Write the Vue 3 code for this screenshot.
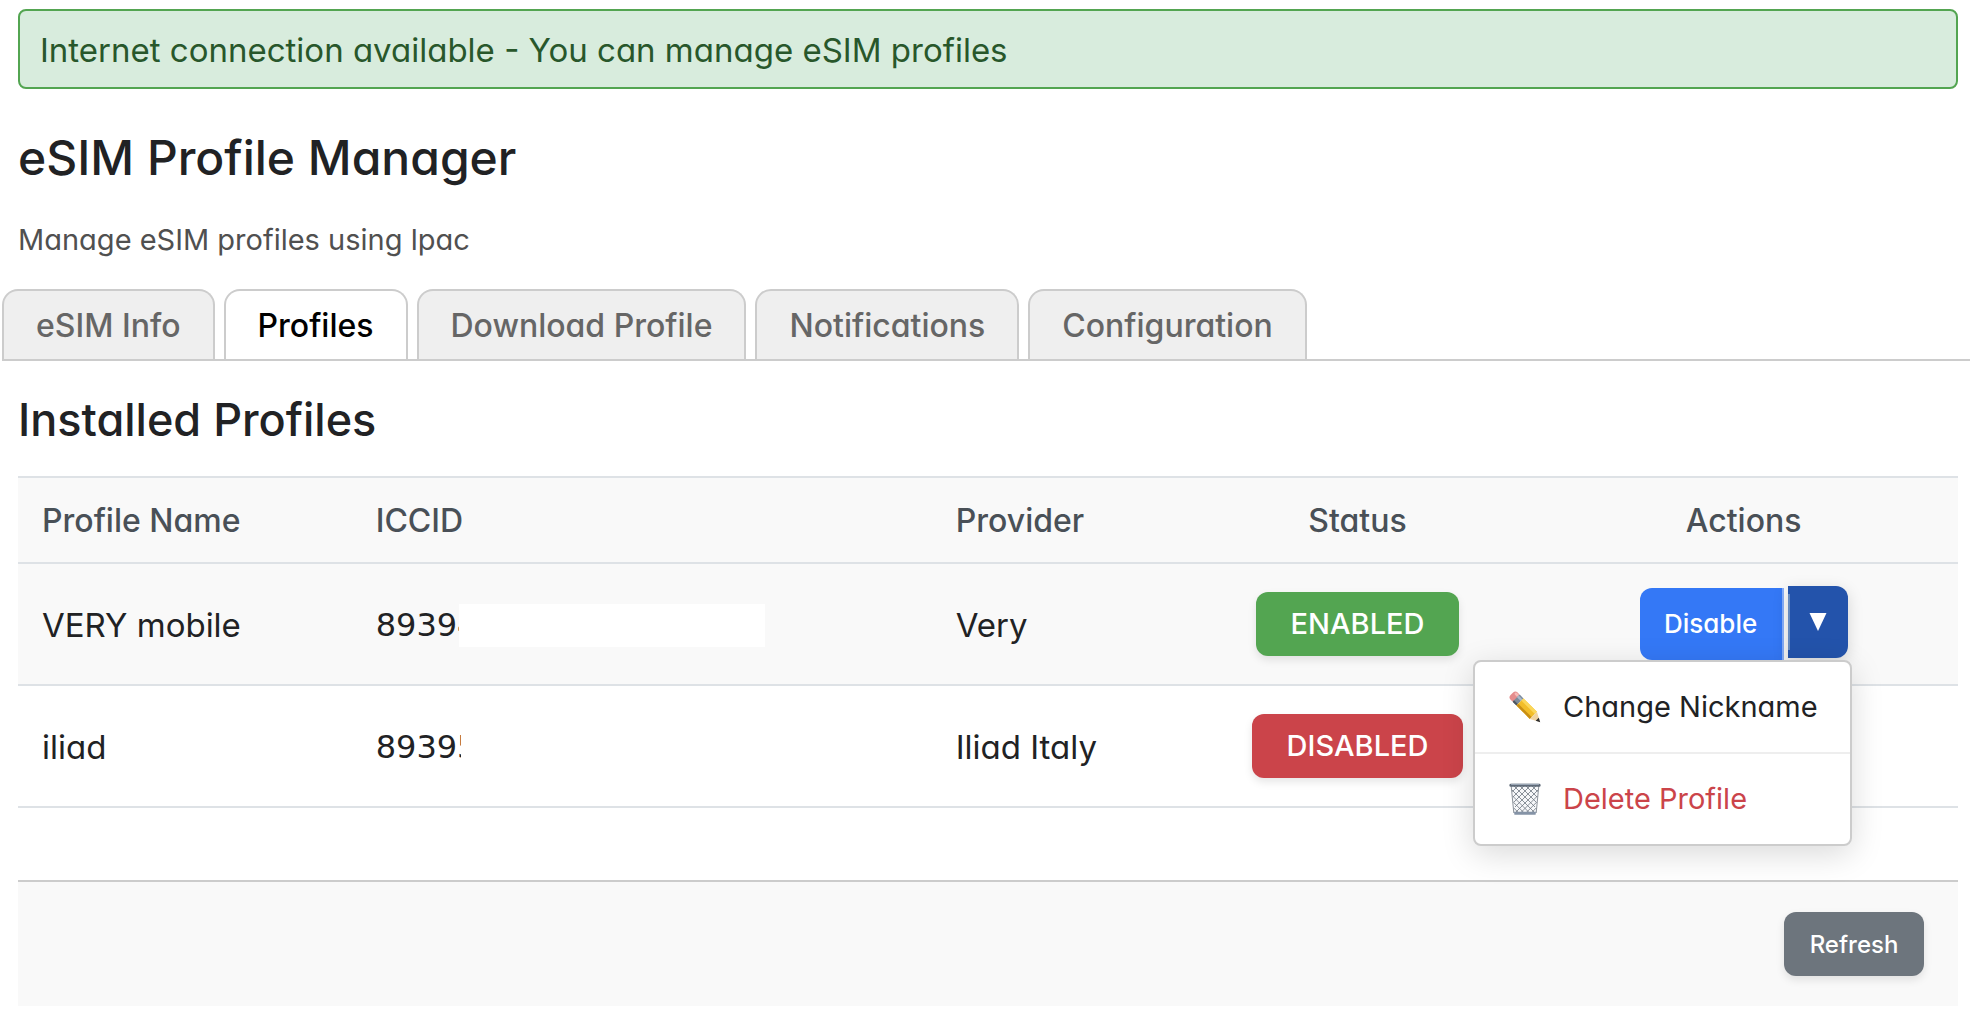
<script setup>
import { ref } from 'vue'

const tabs = ['eSIM Info', 'Profiles', 'Download Profile', 'Notifications', 'Configuration']
const activeTab = ref('Profiles')

const profiles = [
  { name: 'VERY mobile', iccid: '89394', provider: 'Very', enabled: true },
  { name: 'iliad', iccid: '89395', provider: 'Iliad Italy', enabled: false },
]
const openMenu = ref('VERY mobile')

function toggleMenu(name) {
  openMenu.value = openMenu.value === name ? '' : name
}
</script>

<template>
  <main class="page">
    <div class="banner" role="status">Internet connection available - You can manage eSIM profiles</div>

    <header class="intro">
      <h1>eSIM Profile Manager</h1>
      <p>Manage eSIM profiles using lpac</p>
    </header>

    <nav class="tabs">
      <button
        v-for="tab in tabs"
        :key="tab"
        type="button"
        class="tab"
        :class="{ active: tab === activeTab }"
        @click="activeTab = tab"
      >{{ tab }}</button>
    </nav>

    <section class="panel">
      <h2>Installed Profiles</h2>

      <table class="profiles">
        <colgroup>
          <col class="col-name" />
          <col class="col-iccid" />
          <col class="col-provider" />
          <col class="col-status" />
          <col class="col-actions" />
        </colgroup>
        <thead>
          <tr>
            <th>Profile Name</th>
            <th>ICCID</th>
            <th>Provider</th>
            <th class="center">Status</th>
            <th class="center">Actions</th>
          </tr>
        </thead>
        <tbody>
          <tr v-for="p in profiles" :key="p.name">
            <td>{{ p.name }}</td>
            <td>
              <div class="iccid">
                <span class="digits">{{ p.iccid }}</span>
                <span class="redacted" :class="{ short: !p.enabled }"></span>
              </div>
            </td>
            <td>{{ p.provider }}</td>
            <td class="center middle">
              <span class="badge" :class="p.enabled ? 'on' : 'off'">{{ p.enabled ? 'ENABLED' : 'DISABLED' }}</span>
            </td>
            <td class="center middle">
              <div v-if="p.enabled" class="split">
                <button type="button" class="split-main">Disable</button>
                <button
                  type="button"
                  class="split-toggle"
                  :class="{ open: openMenu === p.name }"
                  aria-label="More actions"
                  @click="toggleMenu(p.name)"
                >
                  <svg width="18" height="18" viewBox="0 0 18 18" aria-hidden="true">
                    <path d="M0.5 0h17L9 18z" fill="#fff" />
                  </svg>
                </button>

                <div v-if="openMenu === p.name" class="menu">
                  <button type="button" class="menu-item">
                    <svg class="icon" viewBox="0 0 32 32" aria-hidden="true">
                      <g transform="translate(4.6 4.6) rotate(45)">
                        <rect x="-2.5" y="-5" width="8" height="10" rx="3.2" fill="#e58c8c" />
                        <rect x="-1" y="-4.2" width="5" height="2.6" rx="1.3" fill="#f6b9b5" />
                        <rect x="3.6" y="-5" width="5.4" height="10" fill="#7d8b9b" />
                        <rect x="3.6" y="-3.6" width="5.4" height="2.4" fill="#a9b9ca" />
                        <rect x="3.6" y="3" width="5.4" height="2" fill="#4f565f" />
                        <rect x="9" y="-5" width="19" height="10" fill="#f2bd28" />
                        <rect x="9" y="-5" width="19" height="3" fill="#fbd75a" />
                        <rect x="9" y="2.4" width="19" height="2.6" fill="#c98f14" />
                        <path d="M28 -5L36 -0.8V0.8L28 5z" fill="#f0d3a0" />
                        <path d="M33.4 -2.2L37.6 0L33.4 2.2z" fill="#2d2d2d" />
                      </g>
                    </svg>
                    <span>Change Nickname</span>
                  </button>
                  <button type="button" class="menu-item danger">
                    <svg class="icon" viewBox="0 0 32 32" aria-hidden="true">
                      <path d="M2.4 3h27.2L27 30H5z" fill="#f6f7f9" />
                      <g fill="none" stroke="#6f7680" stroke-width="0.8">
                        <path d="M3 7L25 29M3.6 13L20 29.4M4.2 19L15 29.8M4.8 25L10 30.2M5 3L26 24M11 3L27 19M17 3L28 14M23 3L28.6 8.6" />
                        <path d="M29 7L7 29M28.4 13L12 29.4M27.8 19L17 29.8M27.2 25L22 30.2M27 3L6 24M21 3L5 19M15 3L4 14M9 3L3.4 8.6" />
                        <path d="M2.2 3L4.8 30M29.8 3L27.2 30" />
                      </g>
                      <path d="M5 28.8h22l-0.4 3H5.4z" fill="#8593a6" />
                      <rect x="0.4" y="0.8" width="31.2" height="3" rx="1.4" fill="#5e6977" />
                      <rect x="2" y="0.8" width="28" height="1.2" rx="0.6" fill="#9aa6b5" />
                    </svg>
                    <span>Delete Profile</span>
                  </button>
                </div>
              </div>
            </td>
          </tr>
        </tbody>
      </table>

      <footer class="footer">
        <button type="button" class="refresh">Refresh</button>
      </footer>
    </section>
  </main>
</template>

<style>
body {
  margin: 0;
  background: #fff;
}
</style>

<style scoped>
.page {
  box-sizing: border-box;
  padding: 9px 0 10px;
  font-family: Inter, "Liberation Sans", sans-serif;
  font-feature-settings: "cv11";
  font-size: 32px;
  color: #212224;
}

button {
  font: inherit;
  font-feature-settings: inherit;
  border: 0;
  margin: 0;
  padding: 0;
  cursor: pointer;
}

.banner {
  margin: 0 12px 0 18px;
  padding: 19px 20px 17px;
  border: 2px solid #53a551;
  border-radius: 8px;
  background: #d8ecdd;
  color: #28572b;
  font-size: 33px;
  line-height: 40px;
}

.intro {
  padding: 41px 12px 31px 18px;
}

h1 {
  margin: 0 0 36px;
  font-size: 48px;
  font-weight: 450;
  line-height: 56px;
}

.intro p {
  margin: 0;
  font-size: 29px;
  line-height: 36px;
  color: #505050;
}

.tabs {
  display: flex;
  gap: 9px;
  margin-left: 2px;
  border-bottom: 2px solid #ccc;
}

.tab {
  padding: 2px 32px 0;
  border: 2px solid #ccc;
  border-bottom: 0;
  border-radius: 16px 16px 0 0;
  background: #efefef;
  color: #666;
  font-weight: 450;
  line-height: 66px;
}

.tab.active {
  background: #fff;
  color: #000;
}

.panel {
  padding: 31px 12px 0 18px;
}

h2 {
  margin: 0 0 28px;
  font-size: 45px;
  font-weight: 450;
  line-height: 56px;
}

.profiles {
  width: 100%;
  table-layout: fixed;
  border-collapse: separate;
  border-spacing: 0;
}

.col-name { width: 17.2%; }
.col-iccid { width: 29.9%; }
.col-provider { width: 13.1%; }
.col-status { width: 17.7%; }
.col-actions { width: 22.1%; }

th,
td {
  box-sizing: border-box;
  padding: 2px 24px 0;
  border-bottom: 2px solid #dee2e6;
  text-align: left;
  line-height: 40px;
}

th {
  height: 88px;
  border-top: 2px solid #dee2e6;
  background: #f9f9f9;
  color: #495057;
  font-weight: 450;
}

td {
  height: 122px;
  font-size: 33px;
}

tbody tr:nth-child(odd) td {
  background: #f9f9f9;
}

.center {
  padding-right: 0;
  padding-left: 0;
  text-align: center;
}

.middle {
  padding-top: 0;
}

.iccid {
  display: flex;
  align-items: center;
}

.digits {
  flex: none;
  font-family: "DejaVu Sans", sans-serif;
  font-size: 32px;
}

/* Covers the private part of the number */
.redacted {
  z-index: 1;
  width: 306px;
  height: 43px;
  margin-left: -18px;
  background: #fff;
}

.redacted.short {
  margin-left: -16px;
}

.badge {
  display: inline-block;
  padding: 0 35px;
  border-radius: 12px;
  color: #fff;
  font-size: 29px;
  font-weight: 450;
  line-height: 64px;
  vertical-align: middle;
  box-shadow: 0 4px 8px rgba(0, 0, 0, 0.1);
}

.badge.on { background: #53a551; }
.badge.off { background: #cb444a; }

.split {
  position: relative;
  display: inline-flex;
  gap: 4px;
  vertical-align: middle;
}

.split-main {
  box-sizing: border-box;
  width: 144px;
  height: 72px;
  border-right: 2px solid #86aefa;
  border-radius: 12px 0 0 12px;
  background: #3478f6;
  color: #fff;
  font-size: 26px;
  font-weight: 500;
}

.split-toggle {
  position: relative;
  display: flex;
  align-items: center;
  justify-content: center;
  width: 60px;
  height: 72px;
  border-radius: 0 12px 12px 0;
  background: #2353ab;
  box-shadow: 0 4px 16px rgba(0, 0, 0, 0.15);
}

.split-toggle.open {
  transform: translateY(-2px);
}

.split-toggle::before {
  content: "";
  position: absolute;
  top: 8px;
  bottom: 8px;
  left: 0;
  width: 2px;
  background: #658abf;
}

.menu {
  position: absolute;
  z-index: 10;
  top: 100%;
  right: -4px;
  box-sizing: border-box;
  min-width: 378px;
  border: 2px solid #ccc;
  border-radius: 8px;
  background: #fff;
  box-shadow: 0 8px 32px rgba(0, 0, 0, 0.15);
}

.menu-item {
  display: flex;
  align-items: center;
  gap: 22px;
  box-sizing: border-box;
  width: 100%;
  height: 90px;
  padding: 0 32px 0 34px;
  background: none;
  color: #212224;
  font-size: 29px;
  white-space: nowrap;
}

.menu-item + .menu-item {
  height: 92px;
  border-top: 2px solid #eee;
}

.menu-item.danger {
  color: #cb444a;
}

.icon {
  flex: none;
  width: 32px;
  height: 32px;
}

.footer {
  display: flex;
  justify-content: flex-end;
  margin-top: 72px;
  padding: 30px 34px;
  border-top: 2px solid #ccc;
  background: #f9f9f9;
}

.refresh {
  width: 140px;
  height: 64px;
  border-radius: 12px;
  background: #6d757d;
  color: #fff;
  font-size: 24px;
  font-weight: 500;
  box-shadow: 0 4px 8px rgba(0, 0, 0, 0.1);
}
</style>
